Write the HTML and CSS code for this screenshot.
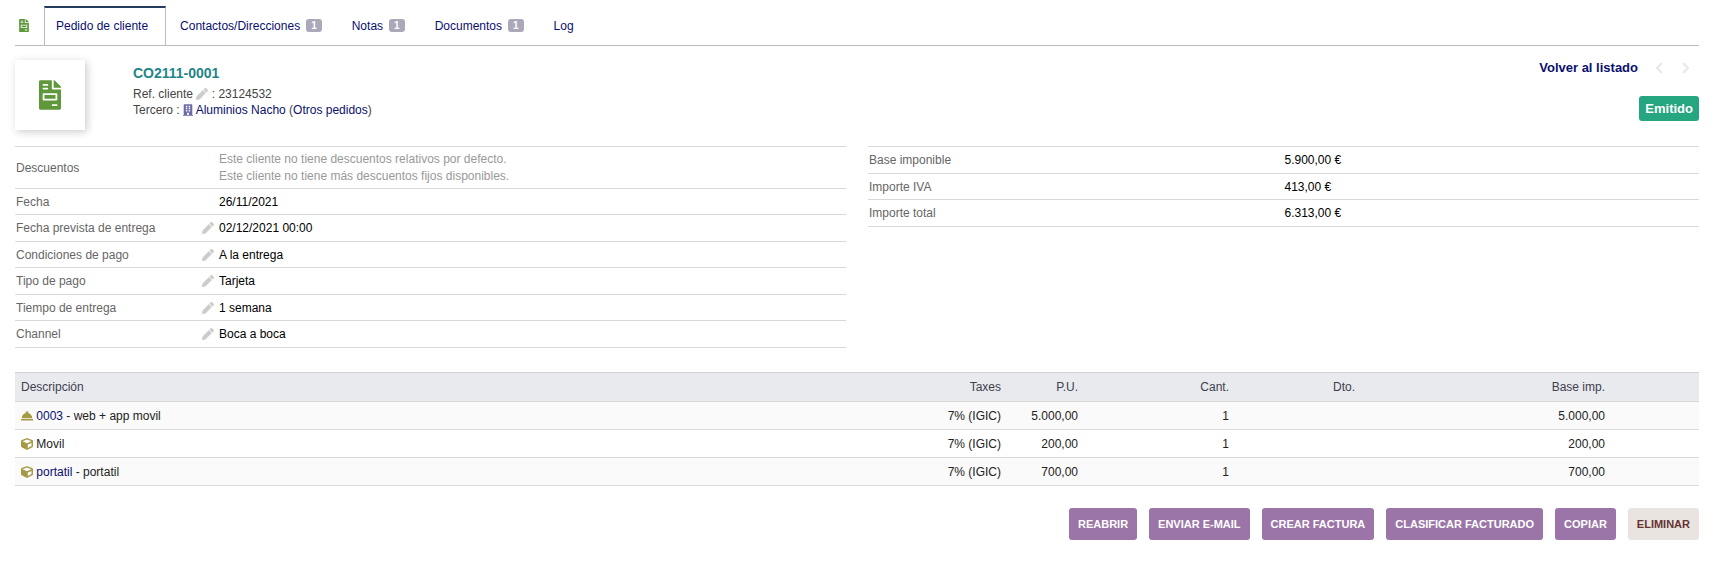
FILE: index.html
```html
<!DOCTYPE html>
<html lang="es">
<head>
<meta charset="utf-8">
<title>Pedido de cliente CO2111-0001</title>
<link rel="stylesheet" href="styles.css">
</head>
<body>
<svg class="sprite" aria-hidden="true">
  <symbol id="invoice" viewBox="0 0 384 512"><path d="M288 256H96v64h192v-64zm89-151L279.100 7c-4.500-4.500-10.600-7-17-7H256v128h128v-6.100c0-6.300-2.500-12.400-7-16.900zm-153 31V0H24C10.700 0 0 10.700 0 24v464c0 13.300 10.700 24 24 24h336c13.300 0 24-10.700 24-24V160H248c-13.200 0-24-10.800-24-24zM64 72c0-4.420 3.580-8 8-8h80c4.420 0 8 3.580 8 8v16c0 4.420-3.580 8-8 8H72c-4.420 0-8-3.580-8-8V72zm0 64c0-4.420 3.580-8 8-8h80c4.420 0 8 3.580 8 8v16c0 4.420-3.580 8-8 8H72c-4.420 0-8-3.580-8-8v-16zm256 304c0 4.420-3.580 8-8 8h-80c-4.420 0-8-3.580-8-8v-16c0-4.420 3.580-8 8-8h80c4.420 0 8 3.580 8 8v16zm0-200v96c0 8.840-7.160 16-16 16H80c-8.840 0-16-7.160-16-16v-96c0-8.840 7.160-16 16-16h224c8.840 0 16 7.160 16 16z"/></symbol>
  <symbol id="pencil" viewBox="0 0 512 512"><path d="M497.900 142.100l-46.100 46.100c-4.700 4.700-12.300 4.700-17 0l-111-111c-4.700-4.700-4.700-12.300 0-17l46.100-46.100c18.700-18.700 49.100-18.700 67.900 0l60.100 60.100c18.800 18.700 18.800 49.100 0 67.900zM284.200 99.800L21.600 362.400.400 483.900c-2.900 16.400 11.400 30.600 27.800 27.800l121.500-21.300 262.600-262.600c4.700-4.700 4.700-12.300 0-17l-111-111c-4.800-4.700-12.400-4.700-17.100 0z"/></symbol>
  <symbol id="building" viewBox="0 0 448 512"><path fill-rule="evenodd" d="M436 480h-20V24c0-13-11-24-24-24H56C43 0 32 11 32 24v456H12c-7 0-12 5-12 12v20h448v-20c0-7-5-12-12-12zM128 64h64v64h-64zM256 64h64v64h-64zM128 160h64v64h-64zM256 160h64v64h-64zM128 256h64v64h-64zM256 256h64v64h-64zM184 480v-96h80v96z"/></symbol>
  <symbol id="bell" viewBox="0 0 512 512"><path d="M288 130.540V112h16c8.840 0 16-7.160 16-16V80c0-8.840-7.160-16-16-16h-96c-8.840 0-16 7.160-16 16v16c0 8.840 7.160 16 16 16h16v18.540C115.490 146.110 32 239.180 32 352h448c0-112.820-83.490-205.890-192-221.460zM496 384H16c-8.840 0-16 7.160-16 16v32c0 8.840 7.160 16 16 16h480c8.840 0 16-7.160 16-16v-32c0-8.840-7.160-16-16-16z"/></symbol>
  <symbol id="cube" viewBox="0 0 512 512"><path fill-rule="evenodd" d="M239.100 6.300l-208 78c-18.700 7-31.100 25-31.100 45v225.100c0 18.200 10.300 34.800 26.500 42.900l208 104c13.500 6.800 29.400 6.800 42.900 0l208-104c16.300-8.100 26.500-24.800 26.500-42.900V129.300c0-20-12.400-37.900-31.100-44.900l-208-78C262 2.200 250 2.200 239.100 6.300zM256 68.400l192 72v1.100l-192 78-192-78v-1.100l192-72zM288 424.400V275.500l160-65v133.900z"/></symbol>
  <symbol id="prev" viewBox="0 0 8 12"><path d="M7 1L2 6l5 5" fill="none" stroke="currentColor" stroke-width="2"/></symbol>
  <symbol id="next" viewBox="0 0 8 12"><path d="M1 1l5 5-5 5" fill="none" stroke="currentColor" stroke-width="2"/></symbol>
</svg>

<nav class="tabs">
  <svg class="tabs-icon"><use href="#invoice"/></svg>
  <a class="tab active" href="#">Pedido de cliente</a>
  <a class="tab" href="#">Contactos/Direcciones <span class="count">1</span></a>
  <a class="tab" href="#">Notas <span class="count">1</span></a>
  <a class="tab" href="#">Documentos <span class="count">1</span></a>
  <a class="tab" href="#">Log</a>
</nav>

<header class="banner">
  <div class="photo"><svg><use href="#invoice"/></svg></div>
  <div class="ident">
    <h1>CO2111-0001</h1>
    <div>Ref. cliente <a href="#" aria-label="Modificar"><svg class="icon pencil"><use href="#pencil"/></svg></a> : 23124532</div>
    <div>Tercero : <a href="#"><svg class="icon building"><use href="#building"/></svg> Aluminios Nacho</a> (<a href="#">Otros pedidos</a>)</div>
  </div>
  <div class="status">
    <div class="pager">
      <a href="#">Volver al listado</a>
      <span class="arrows"><svg><use href="#prev"/></svg><svg><use href="#next"/></svg></span>
    </div>
    <span class="state">Emitido</span>
  </div>
</header>

<main>
  <div class="halves">
    <table class="fields">
      <colgroup><col class="c-label"><col class="c-edit"><col></colgroup>
      <tr class="tall"><th scope="row">Descuentos</th><td></td><td class="muted">Este cliente no tiene descuentos relativos por defecto.<br>Este cliente no tiene más descuentos fijos disponibles.</td></tr>
      <tr><th scope="row">Fecha</th><td></td><td>26/11/2021</td></tr>
      <tr><th scope="row">Fecha prevista de entrega</th><td><a href="#" aria-label="Modificar"><svg class="icon pencil"><use href="#pencil"/></svg></a></td><td>02/12/2021 00:00</td></tr>
      <tr><th scope="row">Condiciones de pago</th><td><a href="#" aria-label="Modificar"><svg class="icon pencil"><use href="#pencil"/></svg></a></td><td>A la entrega</td></tr>
      <tr><th scope="row">Tipo de pago</th><td><a href="#" aria-label="Modificar"><svg class="icon pencil"><use href="#pencil"/></svg></a></td><td>Tarjeta</td></tr>
      <tr><th scope="row">Tiempo de entrega</th><td><a href="#" aria-label="Modificar"><svg class="icon pencil"><use href="#pencil"/></svg></a></td><td>1 semana</td></tr>
      <tr><th scope="row">Channel</th><td><a href="#" aria-label="Modificar"><svg class="icon pencil"><use href="#pencil"/></svg></a></td><td>Boca a boca</td></tr>
    </table>
    <table class="fields amounts">
      <colgroup><col class="c-half"><col></colgroup>
      <tr><th scope="row">Base imponible</th><td>5.900,00 €</td></tr>
      <tr><th scope="row">Importe IVA</th><td>413,00 €</td></tr>
      <tr><th scope="row">Importe total</th><td>6.313,00 €</td></tr>
    </table>
  </div>

  <table class="lines">
    <colgroup><col><col class="c-tax"><col class="c-price"><col class="c-qty"><col class="c-disc"><col class="c-base"><col class="c-tools"></colgroup>
    <thead>
      <tr><th scope="col">Descripción</th><th scope="col">Taxes</th><th scope="col">P.U.</th><th scope="col">Cant.</th><th scope="col">Dto.</th><th scope="col">Base imp.</th><td></td></tr>
    </thead>
    <tbody>
      <tr><td><a href="#"><svg class="icon product"><use href="#bell"/></svg> 0003</a> - web + app movil</td><td>7% (IGIC)</td><td>5.000,00</td><td>1</td><td></td><td>5.000,00</td><td></td></tr>
      <tr><td><svg class="icon product"><use href="#cube"/></svg> Movil</td><td>7% (IGIC)</td><td>200,00</td><td>1</td><td></td><td>200,00</td><td></td></tr>
      <tr><td><a href="#"><svg class="icon product"><use href="#cube"/></svg> portatil</a> - portatil</td><td>7% (IGIC)</td><td>700,00</td><td>1</td><td></td><td>700,00</td><td></td></tr>
    </tbody>
  </table>

  <div class="actions">
    <button type="button">REABRIR</button>
    <button type="button">ENVIAR E-MAIL</button>
    <button type="button">CREAR FACTURA</button>
    <button type="button">CLASIFICAR FACTURADO</button>
    <button type="button">COPIAR</button>
    <button type="button" class="delete">ELIMINAR</button>
  </div>
</main>
</body>
</html>
```
FILE: styles.css
```css
* { box-sizing: border-box; }

body {
  margin: 0;
  padding: 6px 11px 20px 15px;
  background: #fff;
  color: #444;
  font: 12px/16px "Liberation Sans", Arial, sans-serif;
}

a { color: #0a0f6e; text-decoration: none; }

.sprite { position: absolute; width: 0; height: 0; }
.icon { width: 12px; height: 12px; fill: currentColor; vertical-align: -2px; }
.pencil { color: #ccc; }
.building { width: 10px; color: #6c6aa8; }
.product { color: #a69944; }

/* Tabs */
.tabs {
  display: flex;
  align-items: stretch;
  height: 40px;
  border-bottom: 1px solid #bbb;
}
.tabs-icon { width: 10px; height: 13px; margin: 13px 15px 0 4px; fill: #5f983b; }
.tab { display: flex; align-items: center; gap: 6px; padding: 0 16px 0 14px; }
.tab.active {
  padding: 0 17px 2px 11px;
  border: 1px solid #bbb;
  border-top: 2px solid #263c5c;
  border-bottom: 0;
}
.count {
  padding: 0 5px;
  border-radius: 3px;
  background: #aaa8b9;
  color: #fff;
  font-size: 10px;
  font-weight: bold;
  line-height: 13px;
}

/* Banner */
.banner { display: flex; align-items: flex-start; padding-top: 14px; height: 100px; }
.photo {
  display: flex;
  align-items: center;
  justify-content: center;
  width: 70px;
  height: 70px;
  box-shadow: 2px 2px 8px #ccc;
}
.photo svg { width: 22px; height: 30px; fill: #5f983b; }
.ident { flex: 1; margin-left: 48px; padding-top: 3px; }
.ident h1 { margin: 0 0 3px; color: #1f8589; font-size: 14px; line-height: 20px; }
.status { display: flex; flex-direction: column; align-items: flex-end; gap: 20px; }
.pager { display: flex; align-items: center; font-size: 13px; font-weight: bold; }
.arrows { display: flex; gap: 19px; margin: 0 9px 0 17px; color: #e8e8e8; }
.arrows svg { width: 8px; height: 12px; }
.state {
  padding: 0 6px;
  border-radius: 3px;
  background: #25a580;
  color: #fff;
  font-size: 13px;
  font-weight: bold;
  line-height: 25px;
}

/* Field tables */
.halves { display: grid; grid-template-columns: 1fr 1fr; gap: 22px; align-items: start; }
table { width: 100%; border-collapse: collapse; table-layout: fixed; }
th { font-weight: normal; text-align: left; }
th, td { padding: 0; }
.fields { border-top: 1px solid #d8d8d8; }
.fields tr { height: 27px; border-bottom: 1px solid #d8d8d8; }
.fields tr:nth-child(even) { height: 26px; }
.fields .tall { height: 42px; }
.fields th { padding-left: 1px; color: #666; }
.fields td { color: #000; }
.fields td.muted { color: #999; line-height: 17px; }
.amounts th, .amounts td { padding-left: 1px; }
.c-label { width: 187px; }
.c-edit { width: 17px; }
.c-half { width: 50%; }

/* Order lines */
.lines { margin-top: 24px; border-top: 1px solid #d0d2d6; }
.lines tr { height: 28px; border-bottom: 1px solid #d8d8d8; }
.lines thead tr { height: 29px; background: #e9eaed; }
.lines th { color: #404050; }
.lines td { color: #222; }
.lines tbody tr:nth-child(odd) { background: #fafafa; }
.lines th, .lines td { text-align: right; }
.lines th:first-child, .lines td:first-child { padding-left: 6px; text-align: left; }
.c-tax { width: 120px; }
.c-price { width: 77px; }
.c-qty { width: 151px; }
.c-disc { width: 126px; }
.c-base { width: 250px; }
.c-tools { width: 94px; }

/* Actions */
.actions { display: flex; flex-wrap: wrap; justify-content: flex-end; gap: 12px; margin-top: 22px; }
button {
  padding: 0 9px;
  border: 0;
  border-radius: 3px;
  background: #9c75a8;
  color: #fff;
  font: bold 11px/32px "Liberation Sans", Arial, sans-serif;
}
.delete { background: #e9e4e0; color: #633; }
```
